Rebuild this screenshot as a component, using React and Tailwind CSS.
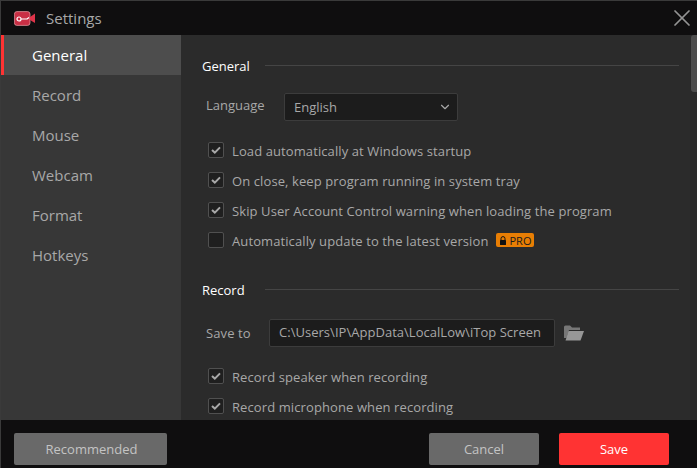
import React from "react";
import { ChevronDown, X } from "lucide-react";

function Check({ checked, label, children }) {
  return (
    <div className="flex items-center h-[30px] pl-[27px]">
      <span className="w-4 h-4 mr-2 rounded-[2px] border border-[#505050] bg-[#1f1f1f] flex items-center justify-center shrink-0">
        {checked && (
          <svg width="12" height="12" viewBox="0 0 12 12" fill="none">
            <path d="M2 6 L4.8 8.6 L10 3.4" stroke="#a8a8a8" strokeWidth="2" />
          </svg>
        )}
      </span>
      <span className="pt-1 text-[13px] tracking-[0.1px] text-[#a8a8a8] whitespace-nowrap">{label}</span>
      {children}
    </div>
  );
}

function Section({ title }) {
  return (
    <div className="flex items-center h-5 pl-[21px] pr-[18px]">
      <span className="pt-1 text-[13px] text-white w-[63px] shrink-0">{title}</span>
      <div className="flex-1 h-px bg-[#454545]" />
    </div>
  );
}

function Nav({ label, active }) {
  return (
    <div className={active ? "h-10 flex items-center pl-7 border-l-[3px] border-[#ff3333] bg-[#4d4d4d] text-white text-[15px]" : "h-10 flex items-center pl-[31px] text-[#a8a8a8] text-[15px]"}>
      {label}
    </div>
  );
}

export default function App() {
  return (
    <div className="w-[697px] h-[468px] flex flex-col overflow-hidden bg-[#0f0e0f] border-t border-l border-[#3a3a3a] font-['Open_Sans',sans-serif]">
      <div className="h-[34px] shrink-0 flex items-center pl-[13px] pr-px">
        <svg width="22" height="15" viewBox="0 0 22 15" className="shrink-0">
          <rect x="0.4" y="0.6" width="15.6" height="13.8" rx="2.5" fill="#c92f45" stroke="#e8a0a8" strokeWidth="0.7" />
          <path d="M16 6 L21 2.5 V12 L16 9 Z" fill="#e0344a" />
          <circle cx="5" cy="8" r="2" fill="none" stroke="#fff" strokeWidth="1.2" />
          <path d="M7 8 H13 M13 8 L15 6.5" stroke="#fff" strokeWidth="1.2" fill="none" />
        </svg>
        <span className="ml-[10px] text-[15px] text-[#a8a8a8] flex-1">Settings</span>
        <X size={28} strokeWidth={1.5} className="text-[#949494]" />
      </div>
      <div className="flex flex-1 min-h-0">
        <div className="w-[180px] shrink-0 bg-[#373737]">
          <Nav label="General" active />
          <Nav label="Record" />
          <Nav label="Mouse" />
          <Nav label="Webcam" />
          <Nav label="Format" />
          <Nav label="Hotkeys" />
        </div>
        <div className="relative flex-1 bg-[#2b2b2b] overflow-hidden pt-[20px]">
          <div className="absolute right-0 top-0 w-[6px] h-[57px] bg-[#4d4d4d] rounded-l-[3px]" />
          <Section title="General" />
          <div className="flex items-center h-[28px] mt-[18px] pl-[25px]">
            <span className="text-[13px] text-[#a8a8a8] w-[78px] pb-[2px]">Language</span>
            <div className="w-[174px] h-[28px] rounded-[2px] border border-[#3c3c3c] bg-[#1c1c1c] flex items-center justify-between pl-[9px] pr-[5px]">
              <span className="pt-px text-[13px] text-[#a8a8a8]">English</span>
              <ChevronDown size={14} className="text-[#a8a8a8]" />
            </div>
          </div>
          <div className="mt-[14px]">
            <Check checked label="Load automatically at Windows startup" />
            <Check checked label="On close, keep program running in system tray" />
            <Check checked label="Skip User Account Control warning when loading the program" />
            <Check label="Automatically update to the latest version">
              <span className="ml-2 h-[14px] px-[3px] rounded-[2px] bg-[#e87e04] flex items-center gap-[2px] text-[11px] text-[#1a1a1a] leading-none">
                <svg width="8" height="9" viewBox="0 0 8 9">
                  <path d="M2 4 V2.6 A2 2 0 0 1 6 2.6 V4" fill="none" stroke="#111" strokeWidth="1" />
                  <rect x="1" y="4" width="6" height="5" rx="0.5" fill="#111" />
                </svg>
                PRO
              </span>
            </Check>
          </div>
          <div className="mt-[24px]"><Section title="Record" /></div>
          <div className="flex items-center h-[28px] mt-[20px] pl-[25px]">
            <span className="pt-[2px] text-[13px] tracking-[0.1px] text-[#a8a8a8] w-[63px]">Save to</span>
            <div className="w-[286px] h-[28px] rounded-[2px] border border-[#3c3c3c] bg-[#1c1c1c] flex items-center pl-[9px]">
              <span className="text-[13px] tracking-[0.03px] text-[#a8a8a8] whitespace-nowrap">C:\Users\IP\AppData\LocalLow\iTop Screen</span>
            </div>
            <svg width="20" height="16" viewBox="0 0 20 16" className="ml-[9px]">
              <path d="M0 2 Q0 0.5 1.5 0.5 H6 L8 2.5 H16 V5 H5 L2.5 13 H0 Z" fill="#777777" />
              <path d="M4.5 6 H20 L16.5 15.5 H1.5 Z" fill="#979797" />
            </svg>
          </div>
          <div className="mt-[14px]">
            <Check checked label="Record speaker when recording" />
            <Check checked label="Record microphone when recording" />
          </div>
        </div>
      </div>
      <div className="h-[48px] shrink-0 flex items-start pt-[13px] pl-[13px] pr-[28px]">
        <div className="w-[153px] h-[32px] rounded-[2px] bg-[#696969] flex items-center justify-center pl-[2px] pt-[2px] text-[13px] text-[#c4c4c4]">Recommended</div>
        <div className="ml-auto w-[110px] h-[32px] rounded-[2px] bg-[#696969] flex items-center justify-center pt-[2px] text-[13px] text-[#c4c4c4]">Cancel</div>
        <div className="ml-5 w-[110px] h-[32px] rounded-[2px] bg-[#ff3333] flex items-center justify-center pt-[2px] text-[13px] text-white">Save</div>
      </div>
    </div>
  );
}
